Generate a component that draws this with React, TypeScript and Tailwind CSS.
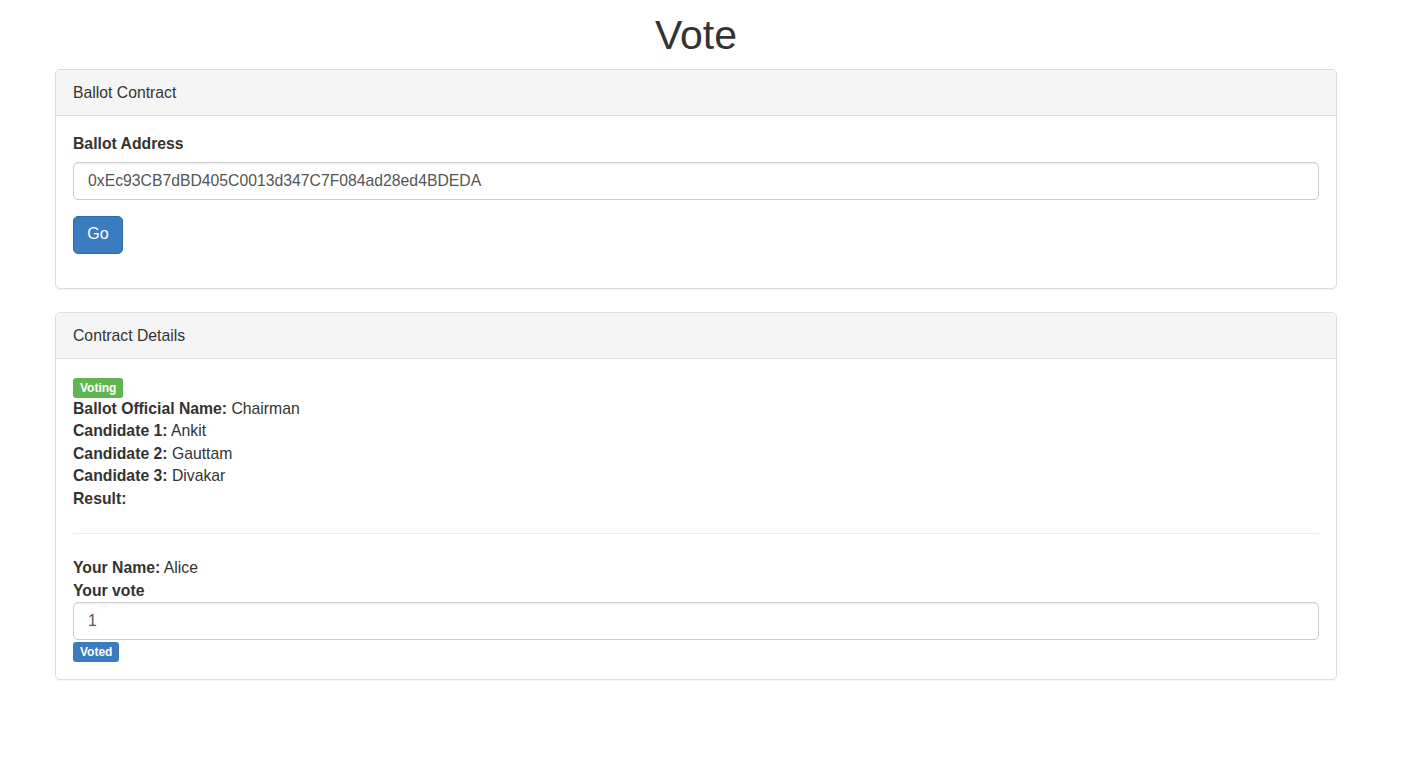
import React from "react";

// Ballot voting page — Bootstrap-3 look, rendered at ~112% scale.

const font = "font-['Liberation_Sans','Helvetica_Neue',Arial,sans-serif]";

function Panel({ title, children, bodyClass }: { title: string; children: React.ReactNode; bodyClass?: string }) {
  return (
    <div className="rounded-[5px] border border-[#dddddd] bg-white shadow-[0_1px_1px_rgba(0,0,0,0.05)]">
      <div className="rounded-t-[4px] border-b border-[#dddddd] bg-[#f5f5f5] px-[17px] py-[11px] text-[15.75px] leading-[23px] text-[#333333]">
        {title}
      </div>
      <div className={bodyClass ?? "px-[17px] pt-[17px] pb-[17px]"}>{children}</div>
    </div>
  );
}

function TextInput({ value }: { value: string }) {
  return (
    <input
      readOnly
      defaultValue={value}
      className="block h-[38px] w-full rounded-[5px] border border-[#cccccc] bg-white px-[14px] text-[15.75px] text-[#555555] shadow-[inset_0_1px_1px_rgba(0,0,0,0.075)] outline-none"
    />
  );
}

function Badge({ children, color }: { children: React.ReactNode; color: string }) {
  return (
    <span
      className={`inline-flex h-[20px] items-center rounded-[3px] px-[7px] text-[12px] font-bold leading-none text-white ${color}`}
    >
      {children}
    </span>
  );
}

function Field({ label, value }: { label: string; value?: string }) {
  return (
    <div>
      <b className="font-bold">{label}</b>
      {value ? <> {value}</> : null}
    </div>
  );
}

export default function App() {
  return (
    <div className={`min-h-screen bg-white text-[15.75px] leading-[22.5px] text-[#333333] ${font}`}>
      <div className="ml-[55px] w-[1282px]">
        <h1 className="mt-[12px] mb-[11px] text-center text-[41px] leading-[46px] font-normal text-[#333333]">Vote</h1>

        <Panel title="Ballot Contract" bodyClass="px-[17px] pt-[17px] pb-[34px]">
          <label className="mb-[6px] block font-bold">Ballot Address</label>
          <TextInput value="0xEc93CB7dBD405C0013d347C7F084ad28ed4BDEDA" />
          <button className="mt-[16px] h-[38px] w-[50px] rounded-[5px] border border-[#2e6da4] bg-[#3b7bbf] text-[16px] text-white">
            Go
          </button>
        </Panel>

        <div className="h-[23px]" />

        <Panel title="Contract Details" bodyClass="px-[17px] pt-[19px] pb-[17px]">
          <div className="flex">
            <Badge color="bg-[#5fb651]">Voting</Badge>
          </div>
          <Field label="Ballot Official Name:" value="Chairman" />
          <Field label="Candidate 1:" value="Ankit" />
          <Field label="Candidate 2:" value="Gauttam" />
          <Field label="Candidate 3:" value="Divakar" />
          <Field label="Result:" />
          <hr className="mt-[23px] mb-[23px] border-0 border-t border-[#eeeeee]" />
          <Field label="Your Name:" value="Alice" />
          <div className="font-bold">Your vote</div>
          <TextInput value="1" />
          <div className="mt-[2px] flex">
            <Badge color="bg-[#3b7bbf]">Voted</Badge>
          </div>
        </Panel>
      </div>
    </div>
  );
}
